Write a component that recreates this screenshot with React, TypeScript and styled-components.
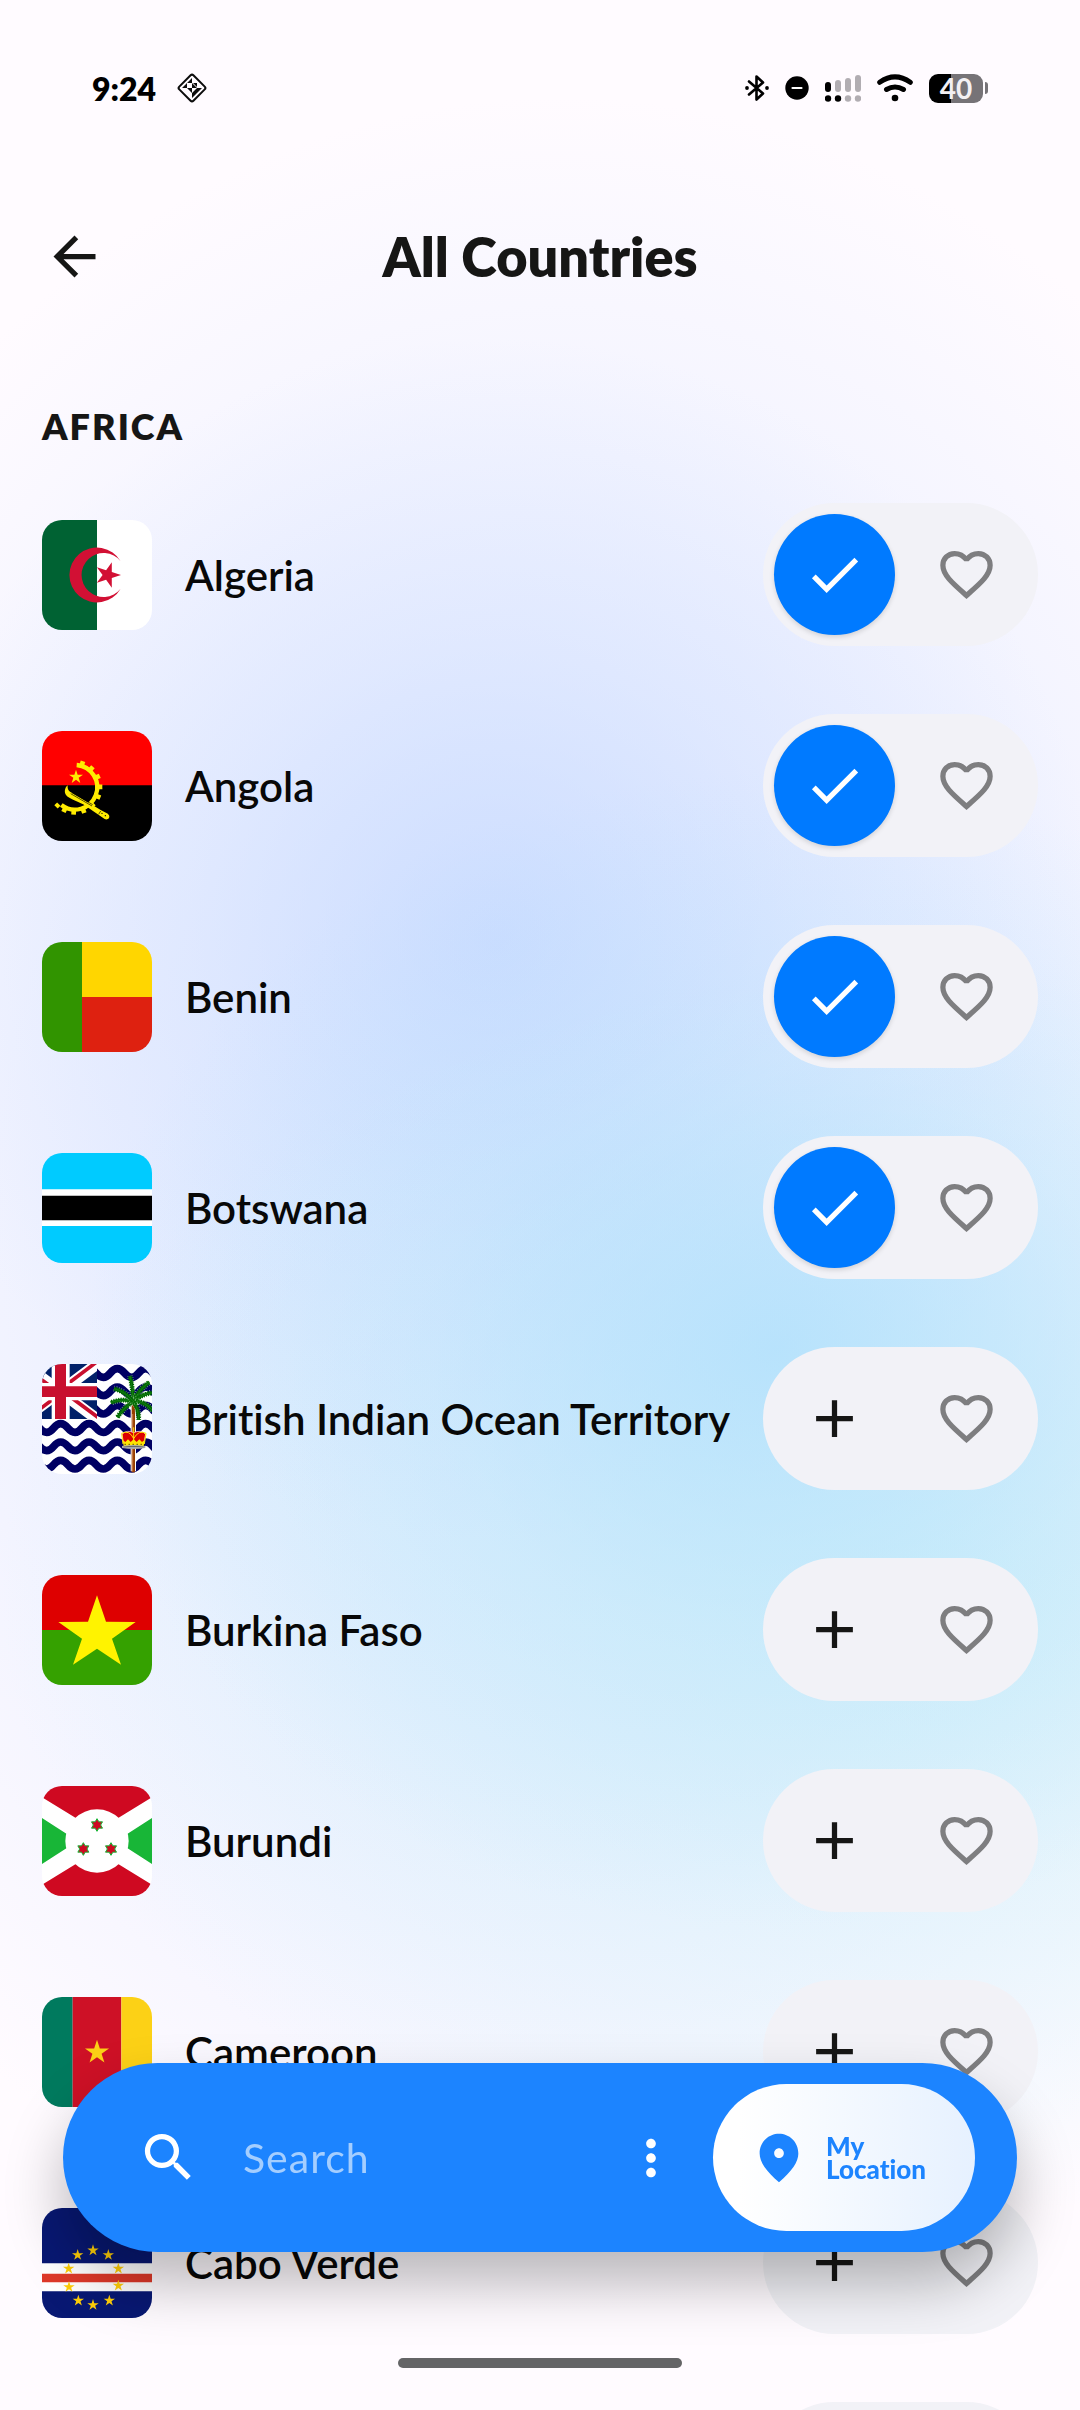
import React, { useState } from 'react';
import styled, { createGlobalStyle, css } from 'styled-components';
import { MdAdd, MdArrowBack, MdCheck, MdMoreVert, MdSearch } from 'react-icons/md';

type Country = {
  code: string;
  name: string;
};

const AFRICA: Country[] = [
  { code: 'dz', name: 'Algeria' },
  { code: 'ao', name: 'Angola' },
  { code: 'bj', name: 'Benin' },
  { code: 'bw', name: 'Botswana' },
  { code: 'io', name: 'British Indian Ocean Territory' },
  { code: 'bf', name: 'Burkina Faso' },
  { code: 'bi', name: 'Burundi' },
  { code: 'cm', name: 'Cameroon' },
  { code: 'cv', name: 'Cabo Verde' },
];

const starPoints = (cx: number, cy: number, r: number, rotation = -90, tips = 5, inner = 0.382) =>
  Array.from({ length: tips * 2 }, (_, i) => {
    const radius = i % 2 ? r * inner : r;
    const angle = ((rotation + (i * 180) / tips) * Math.PI) / 180;
    return `${(cx + radius * Math.cos(angle)).toFixed(1)},${(cy + radius * Math.sin(angle)).toFixed(1)}`;
  }).join(' ');

const wave = (y: number) => {
  let d = `M-29 ${y}`;
  for (let x = -29; x < 350; x += 85) {
    d += `C${x + 21} ${y} ${x + 22} ${y + 26} ${x + 43} ${y + 26}S${x + 64} ${y} ${x + 85} ${y}`;
  }
  return d;
};

const AlgeriaFlag = () => (
  <>
    <path fill="#fff" d="M0 0h330v330H0z" />
    <path fill="#006233" d="M0 0h165v330H0z" />
    <path fill="#d21034" d="M236 123.500A82.500 82.500 0 1 0 236 206.500A66 66 0 1 1 236 123.500z" />
    <polygon fill="#d21034" points={starPoints(197, 165, 40, 0)} />
  </>
);

const AngolaFlag = () => (
  <>
    <path fill="red" d="M0 0h330v165H0z" />
    <path d="M0 163h330v167H0z" />
    <path fill="none" stroke="#ffec00" strokeWidth="13" d="M104 102A67 67 0 1 1 58 222" />
    {[-73, -49, -25, -1, 22, 46, 70, 93, 115, 134].map((angle) => (
      <rect key={angle} x="169" y="162" width="12" height="14" fill="#ffec00" transform={`rotate(${angle} 99 169)`} />
    ))}
    <polygon fill="#ffec00" points={starPoints(102, 138, 22)} />
    <path
      fill="#ffec00"
      d="M77 163C68 170 66 184 72 192C76 198 86 203 100 209C112 214 122 218 130 224L188 264C196 268 205 262 201 253C198 246 188 244 176 237L160 227L84 182C78 178 76 172 77 163z"
    />
    <path fill="none" stroke="#000" strokeWidth="2" d="M86 188L150 225M176 240l-6 10M90 185L152 221" />
    <circle cx="180" cy="247" r="2" />
    <circle cx="190" cy="254" r="2" />
  </>
);

const BeninFlag = () => (
  <>
    <path fill="#319400" d="M0 0h120v330H0z" />
    <path fill="#ffd600" d="M120 0h210v165H120z" />
    <path fill="#de2110" d="M120 165h210v165H120z" />
  </>
);

const BotswanaFlag = () => (
  <>
    <path fill="#00cbff" d="M0 0h330v330H0z" />
    <path fill="#fff" d="M0 109h330v110H0z" />
    <path d="M0 128h330v74H0z" />
  </>
);

const FRONDS = [
  'M274 113Q272 70 264 36',
  'M274 113Q290 78 322 54',
  'M274 113Q302 88 336 86',
  'M274 113Q306 108 334 142',
  'M274 113Q290 132 290 168',
  'M274 113Q248 128 226 160',
  'M274 113Q240 102 206 116',
  'M274 113Q250 82 216 74',
];

const BritishIndianOceanFlag = () => (
  <>
    <path fill="#fff" d="M0 0h330v330H0z" />
    {[-41, 14, 69, 124, 179, 234, 289, 344].map((y) => (
      <path key={y} fill="none" stroke="#000063" strokeWidth="23" d={wave(y)} />
    ))}
    <svg x="0" y="0" width="165" height="165" viewBox="0 0 165 165">
      <path fill="#012169" d="M0 0h165v165H0z" />
      <path stroke="#fff" strokeWidth="34" d="M-55 0L165 165M-55 165L165 0" />
      <path
        fill="#c8102e"
        d="M165 0H147L55 69V83zM-55 0V14L55 96V82zM165 165V151L55 69V83zM-55 165H-37L55 96V82z"
      />
      <path fill="#fff" d="M29 0h54v165H29zM0 57h165v52H0z" />
      <path fill="#c8102e" d="M39 0h33v165H39zM0 67h165v32H0z" />
    </svg>
    <path stroke="#fff" strokeWidth="16" d="M274 113V322" />
    <path stroke="#963e00" strokeWidth="10" d="M274 113V325" />
    <path stroke="#c98050" strokeWidth="3" d="M272 150V322" />
    {FRONDS.map((d) => (
      <g key={d} fill="none">
        <path stroke="#b9dcb9" strokeWidth="18" strokeDasharray="2 5" d={d} />
        <path stroke="#006a00" strokeWidth="14" strokeDasharray="4 3" d={d} />
        <path stroke="#006a00" strokeWidth="9" d={d} />
        <path stroke="#3d9a3d" strokeWidth="1" d={d} />
      </g>
    ))}
    <path fill="#d00" stroke="#fff" strokeWidth="2" d="M244 236L240 210Q256 196 275 206Q296 196 311 210L306 236z" />
    <path fill="none" stroke="#ffe300" strokeWidth="3" d="M243 240L239 208Q262 196 275 224Q290 196 312 208L307 240M275 190v46" />
    <path fill="#ffe300" d="M242 228l8 6 8-8 8 8 9-8 9 8 8-8 8 8 8-6-3 18H245z" />
    <path fill="none" stroke="#111" strokeWidth="3" strokeDasharray="3 9" d="M248 241h56" />
    <path fill="#a9a9a9" d="M240 246q35-6 70 0v6q-35 6-70 0z" />
    <path fill="#555" d="M245 248q30-4 60 0v2q-30-3-60 0z" />
  </>
);

const BurkinaFasoFlag = () => (
  <>
    <path fill="#de0000" d="M0 0h330v165H0z" />
    <path fill="#35a100" d="M0 165h330v165H0z" />
    <polygon fill="#fff300" points="165,61 192,140 281,141 210,191 237,269 165,221 93,269 120,191 49,141 138,140" />
  </>
);

const BurundiFlag = () => (
  <>
    <path fill="#fff" d="M0 0h330v330H0z" />
    <path fill="#cf0921" d="M0 0V34L165 135L330 34V0zM0 330V296L165 195L330 296V330z" />
    <path fill="#18b637" d="M0 96L107 165L0 234zM330 96L223 165L330 234z" />
    <circle cx="165" cy="165" r="95" fill="#fff" />
    {[[165, 117], [124, 189], [207, 189]].map(([x, y]) => (
      <polygon key={x} fill="#cf0921" stroke="#18b637" strokeWidth="3" points={starPoints(x, y, 19, -90, 6, 0.577)} />
    ))}
  </>
);

const CameroonFlag = () => (
  <>
    <path fill="#007a5e" d="M0 0h92v330H0z" />
    <path fill="#ce1126" d="M92 0h146v330H92z" />
    <path fill="#fcd116" d="M238 0h92v330h-92z" />
    <polygon fill="#fcd116" points={starPoints(165, 166, 38)} />
  </>
);

const CABO_VERDE_STARS = [
  [107, 141], [153, 127], [199, 141], [80, 182], [229, 182], [81, 237], [229, 233], [109, 278], [153, 291], [202, 278],
];

const CaboVerdeFlag = () => (
  <>
    <path fill="#081873" d="M0 0h330v330H0z" />
    <path fill="#fff" d="M0 166h330v84H0z" />
    <path fill="#de3929" d="M0 197h330v26H0z" />
    {CABO_VERDE_STARS.map(([x, y]) => (
      <polygon key={`${x}-${y}`} fill="#ffce08" points={starPoints(x, y, 18)} />
    ))}
  </>
);

const FLAGS: Record<string, () => React.JSX.Element> = {
  dz: AlgeriaFlag,
  ao: AngolaFlag,
  bj: BeninFlag,
  bw: BotswanaFlag,
  io: BritishIndianOceanFlag,
  bf: BurkinaFasoFlag,
  bi: BurundiFlag,
  cm: CameroonFlag,
  cv: CaboVerdeFlag,
};

const HeartIcon = () => (
  <svg width="63" height="63" viewBox="0 0 24 24" fill="none" stroke="#7e7e80" strokeWidth="2" strokeMiterlimit="1.4">
    <path d="M12 6.400C10.900 4.900 9.300 4 7.500 4C4.900 4 3 6 3 8.500C3 12.300 6.900 15.500 12 20C17.100 15.500 21 12.300 21 8.500C21 6 19.100 4 16.500 4C14.700 4 13.100 4.900 12 6.400z" />
  </svg>
);

const PinIcon = () => (
  <svg width="58" height="58" viewBox="0 0 24 24" fill="currentColor">
    <path d="M12 2c-4.200 0-8 3.220-8 8.200 0 3.320 2.670 7.250 8 11.800 5.330-4.550 8-8.480 8-11.800C20 5.220 16.200 2 12 2zm0 10c-1.100 0-2-.9-2-2s.9-2 2-2 2 .9 2 2-.9 2-2 2z" />
  </svg>
);

const DiamondIcon = () => (
  <svg width="32" height="32" viewBox="0 0 32 32">
    <rect x="6" y="6" width="20" height="20" rx="2" fill="none" stroke="#0c0c0c" strokeWidth="2" transform="rotate(45 16 16)" />
    <path
      fill="#0c0c0c"
      d="M16 6v5h-5zM11 11v5H6zM16 11l5 5h-5zM11 16h5v5zM21 11l-5 5M16 21l5-5v5zM21 16h5l-5 5zM16 21h5l-5 5zM17 11h4v4z"
    />
  </svg>
);

const BluetoothIcon = () => (
  <svg width="24" height="30" viewBox="0 0 24 30">
    <path
      d="M4 8.500L18 20.500L11.500 26.500V3.500L18 9.500L4 21.500"
      fill="none"
      stroke="#000"
      strokeWidth="2.600"
      strokeLinecap="round"
      strokeLinejoin="round"
    />
    <circle cx="2" cy="15" r="1.900" />
    <circle cx="22" cy="15" r="1.900" />
  </svg>
);

const DoNotDisturbIcon = () => (
  <svg width="24" height="24" viewBox="0 0 24 24">
    <circle cx="12" cy="12" r="11.700" />
    <path d="M7.500 12h9" stroke="#fff" strokeWidth="2.200" strokeLinecap="round" />
  </svg>
);

const SignalIcon = () => (
  <svg width="36" height="27" viewBox="0 0 36 27">
    {[7, 5, 3, 0].map((top, i) => (
      <g key={top} fill={i === 0 ? '#000' : '#b1adb2'}>
        <rect x={i * 10} y={top} width="6" height={17 - top} rx="3" />
        <circle cx={i * 10 + 3} cy="23.500" r="3.200" fill={i < 2 ? '#000' : '#b1adb2'} />
      </g>
    ))}
  </svg>
);

const WifiIcon = () => (
  <svg width="36" height="28" viewBox="0 0 36 28" fill="none" stroke="#000" strokeWidth="5" strokeLinecap="round">
    <path d="M2.700 8.300Q18 -2.600 33.300 8.300M9.500 15.500Q18 10.500 26.500 15.500" />
    <circle cx="18" cy="24" r="3.300" fill="#000" stroke="none" />
  </svg>
);

const CountryRow = ({ country, initiallyAdded }: { country: Country; initiallyAdded: boolean }) => {
  const [added, setAdded] = useState(initiallyAdded);
  const Flag = FLAGS[country.code];

  return (
    <Row>
      <FlagFrame viewBox="0 0 330 330" aria-hidden="true">
        <Flag />
      </FlagFrame>
      <CountryName>{country.name}</CountryName>
      <Actions>
        <ActionButton
          type="button"
          $active={added}
          aria-pressed={added}
          aria-label={`Add ${country.name}`}
          onClick={() => setAdded(!added)}
        >
          {added ? <MdCheck size={63} /> : <MdAdd size={63} />}
        </ActionButton>
        <ActionButton type="button" aria-label={`Favorite ${country.name}`}>
          <HeartIcon />
        </ActionButton>
      </Actions>
    </Row>
  );
};

const App = () => {
  const [query, setQuery] = useState('');
  const countries = AFRICA.filter(({ name }) => name.toLowerCase().includes(query.toLowerCase()));

  return (
    <Screen>
      <GlobalStyle />
      <StatusBar>
        <StatusGroup $gap={20}>
          <Clock>9:24</Clock>
          <DiamondIcon />
        </StatusGroup>
        <StatusGroup $gap={16}>
          <BluetoothIcon />
          <DoNotDisturbIcon />
          <SignalIcon />
          <WifiIcon />
          <Battery>
            <BatteryLevel>40</BatteryLevel>
            <BatteryTip />
          </Battery>
        </StatusGroup>
      </StatusBar>
      <Header>
        <IconButton type="button" aria-label="Back">
          <MdArrowBack size={63} />
        </IconButton>
        <Title>All Countries</Title>
      </Header>
      <main>
        <SectionTitle>AFRICA</SectionTitle>
        <List>
          {countries.map((country) => (
            <CountryRow key={country.code} country={country} initiallyAdded={AFRICA.indexOf(country) < 4} />
          ))}
          <LoadingRow aria-hidden="true">
            <Actions>
              <LoadingSlot />
              <LoadingSlot />
            </Actions>
          </LoadingRow>
        </List>
      </main>
      <SearchBar>
        <MdSearch size={63} />
        <SearchInput
          aria-label="Search countries"
          placeholder="Search"
          value={query}
          onChange={(e) => setQuery(e.target.value)}
        />
        <IconButton type="button" aria-label="More options">
          <MdMoreVert size={58} />
        </IconButton>
        <LocationButton type="button">
          <PinIcon />
          <span>
            My
            <br />
            Location
          </span>
        </LocationButton>
      </SearchBar>
      <HomeIndicator />
    </Screen>
  );
};

const GlobalStyle = createGlobalStyle`
  * {
    box-sizing: border-box;
  }

  body {
    margin: 0;
    font-family: Lato, 'Open Sans', sans-serif;
    font-variant-ligatures: none;
    color: #161615;
  }

  button,
  input {
    margin: 0;
    padding: 0;
    border: 0;
    background: none;
    color: inherit;
    font: inherit;
  }

  svg {
    display: block;
    flex: none;
  }
`;

const Screen = styled.div`
  height: 100vh;
  overflow: hidden;
  background:
    radial-gradient(ellipse 64% 24% at 72% 56%, rgba(176, 224, 252, 0.8), rgba(176, 224, 252, 0.3) 50%, rgba(176, 224, 252, 0)),
    radial-gradient(ellipse 84% 26% at 84% 66%, rgba(200, 240, 248, 0.75), rgba(200, 240, 248, 0.35) 50%, rgba(200, 240, 248, 0)),
    radial-gradient(ellipse 56% 25% at 46% 39%, rgba(190, 212, 255, 0.65), rgba(190, 212, 255, 0.27) 50%, rgba(190, 212, 255, 0)),
    radial-gradient(ellipse 84% 46% at 52% 50%, rgba(216, 230, 255, 0.85), rgba(224, 233, 255, 0.6) 50%, rgba(240, 238, 255, 0)),
    #fffbff;
`;

const StatusBar = styled.div`
  display: flex;
  align-items: center;
  justify-content: space-between;
  height: 176px;
  padding: 0 92px;
`;

const StatusGroup = styled.div<{ $gap: number }>`
  display: flex;
  align-items: center;
  gap: ${({ $gap }) => $gap}px;
`;

const Clock = styled.span`
  color: #000;
  font-size: 32px;
  font-weight: 800;
`;

const Battery = styled.div`
  display: flex;
  align-items: center;
  gap: 2px;
`;

const BatteryLevel = styled.span`
  width: 54px;
  border-radius: 9px;
  background: linear-gradient(90deg, #000 40%, #767377 40%);
  color: #f3f0f3;
  font-size: 28px;
  font-weight: 700;
  line-height: 29px;
  text-align: center;
`;

const BatteryTip = styled.span`
  width: 3px;
  height: 12px;
  border-radius: 0 3px 3px 0;
  background: #767377;
`;

const Header = styled.header`
  display: grid;
  grid-template-columns: 63px 1fr 63px;
  align-items: center;
  height: 161px;
  padding: 0 43px;
`;

const IconButton = styled.button`
  cursor: pointer;
`;

const Title = styled.h1`
  margin: 0;
  font-size: 54px;
  font-weight: 800;
  line-height: 60px;
  text-align: center;
`;

const SectionTitle = styled.h2`
  margin: 66px 42px 52px;
  font-size: 36px;
  font-weight: 800;
  letter-spacing: 2px;
  line-height: 46px;
`;

const List = styled.ul`
  display: flex;
  flex-direction: column;
  gap: 68px;
  margin: 54px 0 0;
  padding: 0 42px;
  list-style: none;
`;

const Row = styled.li`
  display: flex;
  align-items: center;
`;

const LoadingRow = styled(Row)`
  justify-content: flex-end;
`;

const LoadingSlot = styled.span`
  width: 121px;
  height: 121px;
`;

const FlagFrame = styled.svg`
  width: 110px;
  height: 110px;
  border-radius: 20px;
  overflow: hidden;
`;

const CountryName = styled.span`
  flex: 1;
  padding-left: 33px;
  color: #080808;
  font-size: 42px;
  font-weight: 600;
  line-height: 56px;
  white-space: nowrap;
`;

const Actions = styled.div`
  display: flex;
  gap: 11px;
  padding: 11px;
  border-radius: 72px;
  background: #f2f2f7;
`;

const ActionButton = styled.button<{ $active?: boolean }>`
  display: grid;
  place-items: center;
  width: 121px;
  height: 121px;
  border-radius: 50%;
  cursor: pointer;

  ${({ $active }) =>
    $active &&
    css`
      background: #007aff;
      box-shadow: 0 2px 5px rgba(0, 0, 0, 0.14);
      color: #fff;
    `}
`;

const SearchBar = styled.div`
  position: fixed;
  right: 63px;
  bottom: 158px;
  left: 63px;
  display: flex;
  align-items: center;
  padding: 21px 42px 21px 74px;
  border-radius: 95px;
  background: #1c84ff;
  box-shadow: 0 32px 58px rgba(0, 0, 0, 0.27);
  color: #fff;
`;

const SearchInput = styled.input`
  flex: 1;
  min-width: 0;
  padding-left: 43px;
  font-size: 41px;
  letter-spacing: 1px;
  line-height: 56px;
  outline: none;

  &::placeholder {
    color: #a4ceff;
    opacity: 1;
  }
`;

const LocationButton = styled.button`
  display: flex;
  align-items: center;
  gap: 18px;
  width: 262px;
  height: 147px;
  margin-left: 33px;
  padding-left: 37px;
  border-radius: 74px;
  background: linear-gradient(90deg, #fff 10%, #e6f1ff);
  color: #1c84ff;
  font-size: 26px;
  font-weight: 900;
  line-height: 23px;
  text-align: left;
  cursor: pointer;
`;

const HomeIndicator = styled.div`
  position: fixed;
  bottom: 42px;
  left: 50%;
  width: 284px;
  height: 10px;
  margin-left: -142px;
  border-radius: 5px;
  background: #646466;
`;

export default App;
